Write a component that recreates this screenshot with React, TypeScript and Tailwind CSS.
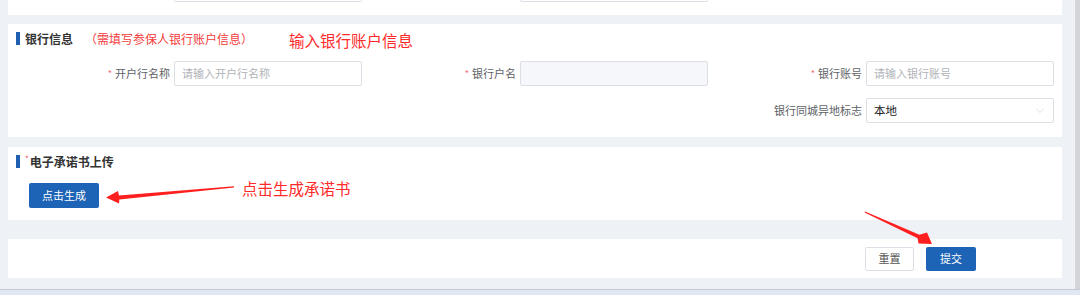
import React from 'react';
import { ChevronDown } from 'lucide-react';

const font = { fontFamily: '"Noto Sans CJK SC", "Noto Sans", sans-serif' };

function SectionTitle({ text, required }: { text: string; required?: boolean }) {
  return (
    <div className="flex items-center h-[13px]">
      <span className="w-[4px] h-[13px] bg-[#1f5fb1]" />
      {required && <span className="ml-[5px] -mt-[6px] text-[8px] leading-none text-[#f04040]">*</span>}
      <span className={`${required ? 'ml-[1px]' : 'ml-[5px]'} text-[12px] font-bold text-[#333] leading-none`}>{text}</span>
    </div>
  );
}

function Field({
  label,
  required,
  placeholder,
  value,
  disabled,
  select,
}: {
  label: string;
  required?: boolean;
  placeholder?: string;
  value?: string;
  disabled?: boolean;
  select?: boolean;
}) {
  return (
    <div className="flex items-center justify-end">
      <div className="flex items-center text-[11px] text-[#606266] mr-[4px] leading-none">
        {required && <span className="text-[#f56c6c] text-[9px] mr-[3px]">*</span>}
        {label}
      </div>
      <div
        className={`w-[188px] h-[25px] border border-[#dcdfe6] rounded-[2px] flex items-center px-[7px] text-[11px] ${
          disabled ? 'bg-[#f5f7fa]' : 'bg-white'
        }`}
      >
        {value ? (
          <span className="text-[#222] text-[11.5px]">{value}</span>
        ) : (
          <span className="text-[#b0b3b8]">{placeholder}</span>
        )}
        {select && <ChevronDown className="ml-auto w-[12px] h-[12px] text-[#c0c4cc]" strokeWidth={1.2} />}
      </div>
    </div>
  );
}

export default function App() {
  return (
    <div className="relative w-[1080px] h-[295px] overflow-hidden bg-[#eef2f6]" style={font}>
      <div className="flex h-[289px]">
        <div className="flex-1 flex flex-col pl-[8px] pr-[13px]">
          {/* previous card, only its bottom edge shows */}
          <div className="bg-white h-[15px] grid grid-cols-3 px-[8px]">
            <div className="flex justify-end">
              <div className="w-[188px] h-[2px] border border-t-0 border-[#dcdfe6] rounded-b-[2px]" />
            </div>
            <div className="flex justify-end">
              <div className="w-[188px] h-[2px] border border-t-0 border-[#dcdfe6] rounded-b-[2px]" />
            </div>
            <div />
          </div>

          {/* bank info */}
          <div className="bg-white mt-[9px] h-[113px] px-[8px] pt-[8px]">
            <div className="flex items-center">
              <SectionTitle text="银行信息" />
              <span className="ml-[12px] text-[12px] text-[#f23c3c] leading-none">（需填写参保人银行账户信息）</span>
            </div>
            <div className="grid grid-cols-3 gap-y-[12px] mt-[16px]">
              <Field label="开户行名称" required placeholder="请输入开户行名称" />
              <Field label="银行户名" required disabled />
              <Field label="银行账号" required placeholder="请输入银行账号" />
              <div />
              <div />
              <Field label="银行同城异地标志" value="本地" select />
            </div>
          </div>

          {/* promise letter */}
          <div className="bg-white mt-[10px] h-[73px] px-[8px] pt-[8px]">
            <SectionTitle text="电子承诺书上传" required />
            <button className="mt-[15px] ml-[13px] w-[70px] h-[25px] rounded-[2px] bg-[#1d63b6] text-white text-[11px] flex items-center justify-center">
              点击生成
            </button>
          </div>

          {/* actions */}
          <div className="bg-white mt-[19px] h-[39px] flex items-center justify-end pr-[86px] gap-[12px]">
            <button className="w-[49px] h-[24px] rounded-[2px] border border-[#dcdfe6] bg-white text-[11px] text-[#555] flex items-center justify-center">
              重置
            </button>
            <button className="w-[50px] h-[24px] rounded-[2px] bg-[#1d63b6] text-white text-[11px] flex items-center justify-center">
              提交
            </button>
          </div>
        </div>
        <div className="w-[5px] bg-[#d3d5d9]" />
      </div>
      <div className="h-[1px] bg-[#c3cad5]" />
      <div className="h-[5px] bg-[#dfe7f3]" />

      {/* screenshot annotations */}
      <span className="absolute left-[289px] top-[33px] text-[15.5px] leading-none text-[#ff2a2a]">输入银行账户信息</span>
      <span className="absolute left-[242px] top-[181px] text-[15.5px] leading-none text-[#ff2a2a]">点击生成承诺书</span>
      <svg className="absolute inset-0 pointer-events-none" width="1080" height="295" viewBox="0 0 1080 295">
        <polygon
          fill="#ff1f1f"
          points="234,186.3 119,195.4 118,191 106,197.6 119,203.6 119.4,199.6 234,187.4"
        />
        <polygon
          fill="#ff1f1f"
          points="865,211.6 919.4,234.8 927,232.5 932,244 918.5,243.5 917.6,238.2 864.6,212.4"
        />
      </svg>
    </div>
  );
}
